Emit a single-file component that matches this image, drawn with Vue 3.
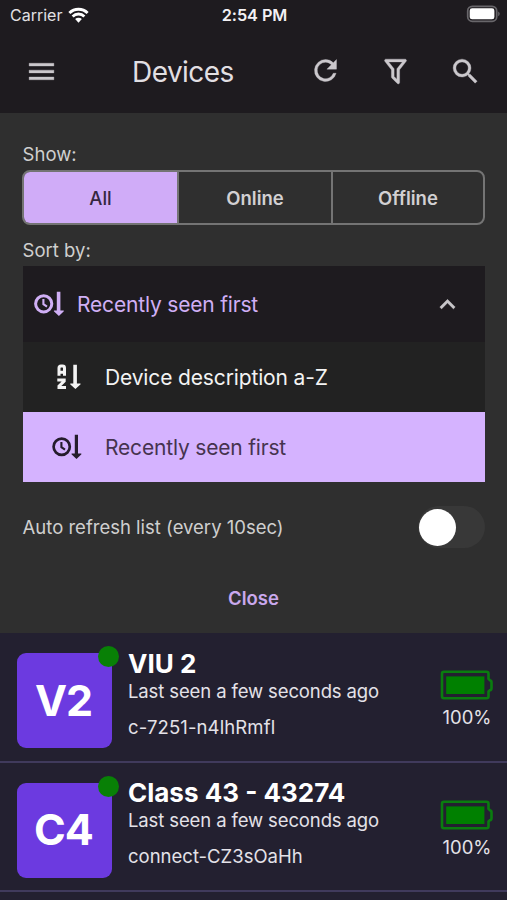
<script setup>
import { ref } from 'vue'

const filters = ['All', 'Online', 'Offline']
const active = ref('All')
const autoRefresh = ref(false)
const devices = [
  { initials: 'V2', name: 'VIU 2', seen: 'Last seen a few seconds ago', id: 'c-7251-n4lhRmfl', battery: '100%', kind: 'viu' },
  { initials: 'C4', name: 'Class 43 - 43274', seen: 'Last seen a few seconds ago', id: 'connect-CZ3sOaHh', battery: '100%', kind: 'class' },
]
</script>

<template>
  <div class="screen">
    <div class="status">
      <div class="carrier">
        <span>Carrier</span>
        <svg class="wifi" viewBox="0 0 20 15">
          <path d="M1.3 5.6a12.3 12.3 0 0 1 17.4 0M4.4 8.9a7.9 7.9 0 0 1 11.2 0" fill="none" stroke="#fff" stroke-width="2.7" />
          <path d="M6.8 11.4a4.6 4.6 0 0 1 6.4 0L10 14.8z" fill="#fff" />
        </svg>
      </div>
      <span class="clock">2:54 PM</span>
      <svg class="power" viewBox="0 0 34 18">
        <rect x="1.7" y="1.3" width="29" height="15" rx="4.6" fill="none" stroke="#68666a" stroke-width="1.7" />
        <rect x="3.7" y="3.3" width="24.7" height="11" rx="2.4" fill="#fff" />
        <path d="M32.2 6.4q1.5.8 1.5 2.4t-1.5 2.4z" fill="#68666a" />
      </svg>
    </div>

    <header class="bar">
      <svg class="icon heavy" viewBox="0 0 24 24"><path d="M3 18h18v-2H3zm0-5h18v-2H3zm0-7v2h18V6z" /></svg>
      <h1>Devices</h1>
      <div class="actions">
        <svg class="icon heavy refresh" viewBox="0 0 24 24"><path d="M17.65 6.35A7.96 7.96 0 0 0 12 4a8 8 0 1 0 7.73 10h-2.08A6 6 0 1 1 12 6c1.66 0 3.14.69 4.22 1.78L13 11h7V4z" /></svg>
        <svg class="icon heavy funnel" viewBox="0 0 24 24"><path d="M15 19.88c.04.3-.06.62-.29.83a1 1 0 0 1-1.41 0L9.29 16.7a1 1 0 0 1-.29-.83v-5.12L4.21 4.62a1 1 0 0 1 .17-1.4A1 1 0 0 1 5 3h14c.22 0 .43.08.62.22a1 1 0 0 1 .17 1.4L15 10.75zM7.04 5 11 10.06v5.52l2 2v-7.53L16.96 5z" /></svg>
        <svg class="icon heavy search" viewBox="0 0 24 24"><path d="M15.5 14h-.79l-.28-.27A6.47 6.47 0 0 0 16 9.5 6.5 6.5 0 1 0 9.5 16c1.61 0 3.09-.59 4.23-1.57l.27.28v.79l5 4.99L20.49 19zm-6 0a4.5 4.5 0 1 1 0-9 4.5 4.5 0 0 1 0 9z" /></svg>
      </div>
    </header>

    <section class="panel">
      <span class="label show">Show:</span>
      <div class="segments">
        <button v-for="f in filters" :key="f" :class="['seg', f.toLowerCase(), { on: f === active }]" @click="active = f">{{ f }}</button>
      </div>
      <span class="label sort">Sort by:</span>

      <div class="dropdown">
        <div class="selected">
          <svg class="sorticon" viewBox="0 0 30 26">
            <circle cx="9.7" cy="12.8" r="8.1" fill="none" stroke="currentColor" stroke-width="3" />
            <path d="M9.4 8v5.2l3.6 2.4" fill="none" stroke="currentColor" stroke-width="2.1" />
            <path d="M22.8.8h3.6v18.8h3.2q.5.5 0 1L24.9 25l-4.8-4.4q-.5-.5 0-1h2.7z" fill="currentColor" />
          </svg>
          <span class="choice recent">Recently seen first</span>
          <svg class="chevron heavy" viewBox="0 0 24 24"><path d="m12 8-6 6 1.41 1.41L12 10.83l4.59 4.58L18 14z" /></svg>
        </div>
        <div class="option">
          <svg class="sorticon" viewBox="0 0 30 26">
            <path d="M7 11.8V4q0-1.900 1.900-1.900h1.700q1.900 0 1.900 1.900v7.800M7 8.300h5.500" fill="none" stroke="currentColor" stroke-width="3" />
            <path d="M5.300 15.900h6.900v1.200l-5.200 5v1.300h7" fill="none" stroke="currentColor" stroke-width="3" />
            <path d="M21.300.8h3.600v18.800h3.500q.5.5 0 1L23.400 25l-5-4.400q-.5-.5 0-1h2.900z" fill="currentColor" />
          </svg>
          <span class="choice describe">Device description a-Z</span>
        </div>
        <div class="option current">
          <svg class="sorticon" viewBox="0 0 30 26">
            <circle cx="9.7" cy="12.8" r="8.1" fill="none" stroke="currentColor" stroke-width="2.7" />
            <path d="M9.4 8v5.2l3.6 2.4" fill="none" stroke="currentColor" stroke-width="2.1" />
            <path d="M22.8.8h3.2v18.8h3.2q.5.5 0 1L24.5 25l-4.8-4.4q-.5-.5 0-1h3.1z" fill="currentColor" />
          </svg>
          <span class="choice recent">Recently seen first</span>
        </div>
      </div>

      <div class="auto">
        <span class="label">Auto refresh list (every 10sec)</span>
        <button class="toggle" :class="{ checked: autoRefresh }" @click="autoRefresh = !autoRefresh"><i></i></button>
      </div>
      <button class="close">Close</button>
    </section>

    <article v-for="d in devices" :key="d.id" class="device">
      <div class="tile"><span :class="['initials', d.kind]">{{ d.initials }}</span><i class="dot"></i></div>
      <div class="info">
        <h2 :class="d.kind">{{ d.name }}</h2>
        <p class="seen">{{ d.seen }}</p>
        <p :class="['ident', d.kind]">{{ d.id }}</p>
      </div>
      <div class="charge">
        <svg viewBox="0 0 54 30">
          <path d="M4 1.8h42.500q2 0 2 2v5l1.400 1.400q1.600.3 1.600 2v6q0 1.700-1.600 2l-1.400 1.400v4.600q0 2-2 2H4q-2 0-2-2V3.800q0-2 2-2z" fill="none" stroke="#0a7d0f" stroke-width="2.6" />
          <rect x="6.200" y="6.400" width="38.200" height="17.600" fill="#008000" />
        </svg>
        <span>{{ d.battery }}</span>
      </div>
    </article>
  </div>
</template>

<style>
body { background: #232030; }
</style>

<style scoped>
* { box-sizing: border-box; }
.screen { width: 507px; height: 900px; overflow: hidden; background: #232030; color: #e4e2e8; font-family: Inter, "Liberation Sans", sans-serif; }
button { font: inherit; padding: 0; border: 0; background: none; color: inherit; }
h1, h2, p { margin: 0; white-space: nowrap; }
svg { display: block; flex: none; }
.status { height: 30px; padding: 0 7px 0 10px; display: grid; grid-template-columns: 1fr auto 1fr; align-items: center; background: #1e1b1f; font-size: 16px; color: #e2e0e3; }
.carrier { display: flex; align-items: center; gap: 6px; }
.wifi { width: 21px; height: 16px; margin-top: -1px; }
.clock { font-weight: 600; font-size: 16.3px; letter-spacing: -0.05px; color: #f3f1f4; padding-right: 1px; }
.power { width: 34px; height: 18px; justify-self: end; margin-top: -2px; }
.bar { height: 83px; padding: 0 25px 0 25px; display: flex; align-items: center; background: #1e1b1f; }
.icon { width: 33px; height: 33px; fill: #cbc8cc; }
.heavy { stroke: #cbc8cc; stroke-width: 0.25; }
.refresh { margin-top: -2px; }
.funnel, .search { margin-top: -1px; }
h1 { margin-left: 74px; font-size: 28px; letter-spacing: -0.55px; line-height: 34px; font-weight: 400; color: #e1dfe2; }
.actions { margin-left: auto; display: flex; gap: 37px; }
.panel { height: 520px; padding: 29px 22px 0; display: flex; flex-direction: column; background: #2f2f2f; }
.label { font-size: 18.5px; line-height: 24px; color: #cfcfcf; white-space: nowrap; padding-left: 0.6px; }
.segments { height: 55px; margin-top: 4px; display: grid; grid-template-columns: 153px 154px 1fr; border: 2px solid #747474; border-radius: 8px; overflow: hidden; }
.seg { font-size: 18.5px; font-weight: 600; color: #d2d0d2; }
.seg + .seg { border-left: 2px solid #747474; }
.seg.on { background: #d0acf8; color: #35263f; font-weight: 500; }
.sort { margin-top: 13px; }
.dropdown { margin-top: 4px; margin-left: 0.5px; }
.selected { height: 76px; padding: 0 22px 0 11px; display: flex; align-items: center; background: #1e1b1f; color: #d0aff5; }
.selected .choice { margin-left: 13.5px; }
.sorticon { width: 30px; height: 26px; }
.choice { font-size: 21px; line-height: 28px; white-space: nowrap; padding-top: 2px; }
.recent { letter-spacing: -0.18px; }
.describe { letter-spacing: -0.14px; }
.chevron { margin-left: auto; width: 31px; height: 31px; fill: #c8c6c9; }
.option { height: 70px; padding-left: 29px; display: flex; align-items: center; gap: 23.5px; background: #222; color: #f3f3f3; }
.current { background: #d5b3ff; color: #251c2c; }
.current .choice { color: #46334f; }
.auto { height: 42px; margin-top: 24px; display: flex; align-items: center; justify-content: space-between; }
.toggle { width: 67px; height: 42px; padding: 2px 1px; border-radius: 21px; background: #383838; }
.toggle i { display: block; width: 37px; height: 37px; border-radius: 50%; background: #fff; }
.toggle.checked i { margin-left: auto; }
.close { align-self: center; margin-top: 38px; font-size: 18.5px; line-height: 24px; font-weight: 600; color: #c9a8ec; }
.device { height: 129.5px; padding: 20px 13px 0 17px; display: flex; border-bottom: 2px solid #403a5c; }
.tile { position: relative; width: 95px; height: 95px; border-radius: 9px; background: #6c3ae0; color: #fff; font-size: 43px; font-weight: 700; display: flex; align-items: center; justify-content: center; }
.initials { letter-spacing: -1px; padding-right: 2px; padding-bottom: 2px; }
.dot { position: absolute; right: -7px; top: -7px; width: 21px; height: 21px; border-radius: 50%; background: #088006; }
.info { margin-left: 16px; margin-top: -5px; }
h2 { font-size: 26px; line-height: 31px; font-weight: 700; color: #fff; }
h2.class { line-height: 30px; }
.seen, .ident { font-size: 18.5px; line-height: 24px; }
.seen { letter-spacing: -0.12px; }
.ident { margin-top: 12px; }
.ident.viu { letter-spacing: 0.12px; }
.charge { margin-left: auto; margin-top: 17px; display: flex; flex-direction: column; align-items: center; font-size: 18.5px; line-height: 24px; }
.charge svg { width: 54px; height: 30px; margin-bottom: 5px; }
</style>
